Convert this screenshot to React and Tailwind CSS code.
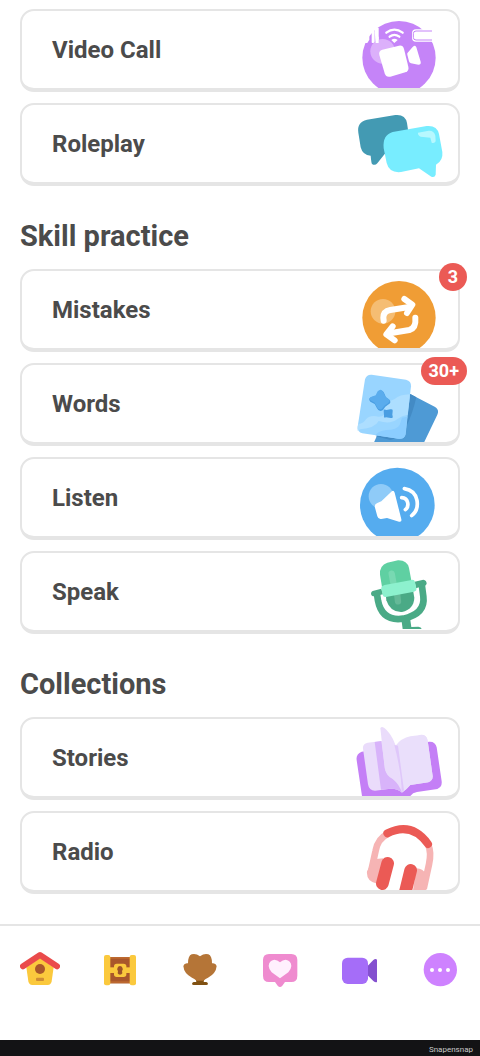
import React from 'react';

const VideoCallArt = () => (
    <svg viewBox="0 33 354 231" className="h-[77px] w-[118px]" aria-hidden="true">
        <circle cx="177" cy="173" r="110" fill="#c584f8" />
        <path d="M60 60 H88 V119 L82 129 H60 Z" fill="#fff" />
        <rect x="95" y="93" width="9" height="36" rx="2" fill="#fff" />
        <path d="M103 84 H116 V129 H107 Z" fill="#fff" />
        <circle cx="128" cy="154" r="37" fill="#dcb0fb" />
        <path d="M107 110 H116 V129 H107 Z" fill="#fff" />
        <g fill="none" stroke="#fff" strokeWidth="7" strokeLinecap="round">
            <path d="M139 98 Q163 80 188 98" />
            <path d="M149 110 Q163 99 178 110" />
        </g>
        <path d="M154 120 Q163 112 173 120 L163 129 Z" fill="#fff" />
        <path d="M250 88 H300 V125 H228 Q216 125 216 113 V100 Q216 88 228 88 Z" fill="#fff" />
        <path d="M276 93 H228 Q220 93 220 101 V112 Q220 120 228 120 H276" fill="none" stroke="#c584f8" strokeWidth="3" />
        <path d="M127 149 L177 137 Q189 135 192 147 L205 200 Q208 213 196 217 L151 230 Q138 233 134 220 L118 165 Q115 153 127 149 Z" fill="#fff" />
        <path d="M203 158 L218 141 Q226 133 229 142 L242 185 Q244 194 235 194 L213 190 Q208 189 207 184 L202 164 Q201 160 203 158 Z" fill="#fff" />
    </svg>
);

const RoleplayArt = () => (
    <svg viewBox="0 21 354 231" className="h-[77px] w-[118px]" aria-hidden="true">
        <path d="M81 65 L166 51 Q196 48 201 75 L204 95 L210 140 L134 168 L112 196 Q105 204 96 198 Q94 195 92 173 Q68 172 62 148 L55 104 Q50 72 81 65 Z" fill="#439ab3" />
        <path d="M158 102 L260 84 Q291 81 297 108 L307 162 Q310 188 288 200 L287 230 Q284 240 274 236 L237 211 L183 222 Q148 226 140 195 L131 151 Q127 111 158 102 Z" fill="#78edff" />
        <path d="M234 104 L266 98 Q282 97 286 113 L287 130 Q283 138 275 134 L271 119 L242 116 Q233 112 234 104 Z" fill="#b7f8ff" />
    </svg>
);

const MistakesArt = () => (
    <svg viewBox="0 48 354 231" className="h-[77px] w-[118px]" aria-hidden="true">
        <circle cx="177" cy="188" r="110" fill="#f09d35" />
        <circle cx="129" cy="169" r="37" fill="#f5bd73" />
        <g fill="none" stroke="#fff" strokeWidth="18" strokeLinecap="round" strokeLinejoin="round">
            <path d="M131 197 L130 188 Q130 169 151 165 L203 157" />
            <path d="M226 188 Q229 219 208 225 L154 234" />
            <path d="M193 132 L217 149 L201 174" />
            <path d="M158 214 L139 238 L164 256" />
        </g>
    </svg>
);

const WordsArt = () => (
    <svg viewBox="0 39 354 231" className="h-[77px] w-[118px]" aria-hidden="true">
        <path d="M196 135 Q202 123 212 127 L284 164 Q299 172 292 188 L248 280 H98 L125 220 Z" fill="#4e9ad5" />
        <path d="M211 126 L229 136 Q219 182 197 229 Q187 258 151 264 L108 253 Z" fill="#438bc5" />
        <path d="M95 68 L198 83 Q214 87 213 103 L197 246 Q194 262 177 260 L67 244 Q52 240 53 224 L75 82 Q79 67 95 68 Z" fill="#99d5ff" />
        <path d="M209 137 L203 188 Q186 190 171 202 Q151 218 116 207 Q105 228 61 232 L53 236 Q51 230 55 216 Q71 214 78 202 Q91 188 115 194 Q137 195 134 173 Q119 169 133 157 Q148 147 164 141 Q179 128 209 127 Z" fill="#addeff" />
        <path d="M186 197 L202 194 L196 249 Q190 263 174 260 L106 250 Q115 237 138 234 Q171 234 179 219 Z" fill="#8bcdff" />
        <path d="M116 122 Q126 110 132 122 L138 136 L149 144 Q155 153 144 158 L136 164 L129 174 Q117 182 111 169 L104 156 L91 149 Q83 140 94 135 L108 132 Z" fill="#4a9ee2" />
        <path d="M113 118 Q123 108 129 119 L136 134 L147 142 Q152 149 142 155 L133 161 L126 170 Q115 176 111 165 L104 152 L91 145 Q84 138 95 134 L107 130 Z" fill="#5aaced" />
        <path d="M131 176 Q132 170 139 174 L151 172 Q160 170 158 178 L157 188 Q161 200 152 198 L138 196 Q130 200 132 190 Z" fill="#4a9ee2" />
    </svg>
);

const ListenArt = () => (
    <svg viewBox="0 27 354 231" className="h-[77px] w-[118px]" aria-hidden="true">
        <circle cx="172" cy="165" r="112" fill="#55acef" />
        <circle cx="123" cy="139" r="37" fill="#8fcbf8" />
        <path d="M154 125 Q161 119 164 128 L184 208 Q186 217 177 215 L141 204 L124 207 Q115 209 112 199 L105 173 Q102 163 112 159 L124 154 Z" fill="#fff" />
        <g fill="none" stroke="#fff" strokeWidth="11" strokeLinecap="round">
            <path d="M185 143 Q200 144 203 158 Q206 171 196 179" />
            <path d="M193 116 Q225 121 231 151 Q236 181 215 197" />
        </g>
    </svg>
);

const SpeakArt = () => (
    <svg viewBox="0 24 354 231" className="h-[77px] w-[118px]" aria-hidden="true">
        <path d="M111 148 L114 167 Q126 230 190 221 Q257 206 250 154 L245 117" fill="none" stroke="#4aaa86" strokeWidth="20" />
        <path d="M98 138 L124 131 L129 148 L103 154 Q94 154 93 146 Q93 140 98 138 Z M224 110 L250 104 Q260 105 260 116 Q257 124 246 124 L228 130 Z" fill="#4aaa86" />
        <path d="M184 222 L210 218 L214 246 L235 245 Q244 246 245 252 H188 Z" fill="#4aaa86" />
        <path d="M137 145 L218 130 L223 158 Q222 192 186 201 Q151 203 139 166 Z" fill="#4aaa86" />
        <path d="M142 53 L174 46 Q201 45 207 69 L216 117 L127 132 L120 89 Q118 61 142 53 Z" fill="#5fd0a2" />
        <path d="M155 86 L160 113" stroke="#78d9b2" strokeWidth="19" strokeLinecap="round" />
        <path d="M171 144 L174 169" stroke="#65b998" strokeWidth="19" strokeLinecap="round" />
        <path d="M134 120 L215 105 Q223 103 225 111 L229 130 Q231 138 222 140 L138 156 Q130 158 128 149 L124 132 Q122 123 134 120 Z" fill="#8df1ce" />
    </svg>
);

const StoriesArt = () => (
    <svg viewBox="0 27 354 231" className="h-[77px] w-[118px]" aria-hidden="true">
        <path d="M65 125 L268 95 Q286 94 290 112 L305 214 Q307 231 292 237 L231 246 Q218 248 211 258 H66 L50 151 Q47 132 65 125 Z" fill="#c47ff6" />
        <path d="M83 98 L125 93 L167 109 L185 104 L239 75 Q260 72 263 92 L278 198 Q279 212 265 217 L211 225 Q200 238 186 248 Q172 235 151 236 L105 242 Q87 242 84 223 L69 116 Q67 102 83 98 Z" fill="#eadcfb" />
        <path d="M104 96 L124 93 L135 174 Q139 199 158 207 Q177 222 186 248 Q172 235 151 236 L123 239 Z" fill="#d8b3fa" />
        <path d="M121 54 Q127 46 139 59 Q163 83 172 125 L188 245 Q176 217 155 203 Q137 194 134 174 Z" fill="#eadcfb" />
        <path d="M166 108 Q184 84 211 79 L243 75 Q260 74 263 92 L278 198 Q279 212 265 217 L211 225 Q200 238 187 247 Z" fill="#eadffb" />
        <path d="M163 105 L174 107 L192 241 L185 247 Q185 192 163 105 Z" fill="#dfc7fa" />
    </svg>
);

const RadioArt = () => (
    <svg viewBox="0 24 354 231" className="h-[77px] w-[118px]" aria-hidden="true">
        <path d="M144 86 Q113 101 107 137 L94 196 M264 118 Q275 141 267 178 L251 251" fill="none" stroke="#f6b4b4" strokeWidth="20" />
        <path d="M101 163 L130 160 L112 236 Q78 230 81 199 Z M229 190 Q250 191 255 205 L265 218 L256 263 H218 Z" fill="#f6b4b4" />
        <path d="M142 85 Q215 49 264 117" fill="none" stroke="#eb5a55" strokeWidth="24" strokeLinecap="round" />
        <path d="M143 175 L127 236 M212 196 L195 265" stroke="#eb5a55" strokeWidth="38" strokeLinecap="round" />
    </svg>
);

const HomeIcon = () => (
    <svg viewBox="60 99 120 120" className="size-10" aria-hidden="true">
        <path d="M120 129 L161 157 L155 199 Q153 210 143 210 H97 Q87 210 85 199 L79 157 Z" fill="#fbc93d" />
        <path d="M69 154 L120 120 L171 154" fill="none" stroke="#ea4b4b" strokeWidth="18" strokeLinecap="round" strokeLinejoin="round" />
        <circle cx="120" cy="162" r="15" fill="#a9572b" />
        <rect x="108" y="188" width="24" height="10" rx="3" fill="#cf8d35" />
    </svg>
);

const ChestIcon = () => (
    <svg viewBox="300 99 120 120" className="size-10" aria-hidden="true">
        <rect x="326" y="126" width="68" height="79" fill="#a9572b" />
        <path d="M326 126 H394 V131 H326 Z M326 199 H394 V205 H326 Z" fill="#bd6930" />
        <path d="M326 157 H394 V174 H326 Z" fill="#fbc93d" />
        <rect x="342" y="146" width="37" height="40" rx="8" fill="#fbc93d" />
        <rect x="312" y="120" width="19" height="91" rx="6" fill="#fbc93d" />
        <rect x="389" y="120" width="19" height="91" rx="6" fill="#fbc93d" />
        <path d="M360 153 A9 9 0 0 1 366 168 L367 175 Q365 179 360 179 Q355 179 353 175 L354 168 A9 9 0 0 1 360 153 Z" fill="#9c5429" />
    </svg>
);

const LeagueIcon = () => (
    <svg viewBox="540 99 120 120" className="size-10" aria-hidden="true">
        <path d="M587 191 H613 L611 201 H619 Q624 202 624 207 Q623 210 619 210 H581 Q577 210 576 207 Q576 202 581 201 H589 Z" fill="#805112" />
        <path d="M600 124 Q613 114 625 118 Q636 122 636 145 Q647 143 650 153 Q648 176 624 188 Q617 191 610 197 H590 Q583 191 576 188 Q552 176 550 153 Q553 143 564 145 Q564 122 575 118 Q587 114 600 124 Z" fill="#b57537" />
    </svg>
);

const FriendsIcon = () => (
    <svg viewBox="60 99 120 120" className="size-10" aria-hidden="true">
        <path d="M87 117 H154 Q172 117 172 135 V182 Q172 201 154 201 H135 L127 212 Q120 220 113 212 L105 201 H87 Q69 201 69 182 V135 Q69 117 87 117 Z" fill="#ef8bcf" />
        <path d="M120 142 Q112 134 103 134 Q87 136 86 153 Q87 164 95 172 L120 190 L145 172 Q153 164 154 153 Q153 136 137 134 Q128 134 120 142 Z" fill="#fff0fd" />
    </svg>
);

const VideoIcon = () => (
    <svg viewBox="300 99 120 120" className="size-10" aria-hidden="true">
        <path d="M379 157 L400 135 Q407 129 411 134 V201 Q407 204 400 198 L379 177 Z" fill="#8450cf" />
        <rect x="306" y="128" width="78" height="79" rx="17" fill="#a56df8" />
    </svg>
);

const MoreIcon = () => (
    <svg viewBox="540 99 120 120" className="size-10" aria-hidden="true">
        <circle cx="601" cy="164" r="50" fill="#ce82ff" />
        <g fill="#fff">
            <circle cx="576" cy="165" r="6" />
            <circle cx="600" cy="165" r="6" />
            <circle cx="624" cy="165" r="6" />
        </g>
    </svg>
);

const PracticeCard = ({ title, Art, badge }) => (
    <button
        type="button"
        className="relative flex w-full items-center justify-between rounded-[14px] border-2 border-b-4 border-[#e5e5e5] bg-white pl-[30px] text-left"
    >
        <span className="text-2xl font-bold">{title}</span>
        <Art />
        {badge && (
            <span className="absolute -top-2 -right-[9px] flex h-7 min-w-7 items-center justify-center rounded-full bg-[#eb5a55] px-2 text-lg font-bold text-white">
                {badge}
            </span>
        )}
    </button>
);

const SectionTitle = ({ children }) => (
    <h2 className="mt-8 mb-[15px] text-[29px] leading-9 font-bold">{children}</h2>
);

const CardList = ({ items }) => (
    <div className="flex flex-col gap-[11px]">
        {items.map((item) => (
            <PracticeCard key={item.title} {...item} />
        ))}
    </div>
);

const conversation = [
    { title: 'Video Call', Art: VideoCallArt },
    { title: 'Roleplay', Art: RoleplayArt },
];

const skills = [
    { title: 'Mistakes', Art: MistakesArt, badge: '3' },
    { title: 'Words', Art: WordsArt, badge: '30+' },
    { title: 'Listen', Art: ListenArt },
    { title: 'Speak', Art: SpeakArt },
];

const collections = [
    { title: 'Stories', Art: StoriesArt },
    { title: 'Radio', Art: RadioArt },
];

const tabs = [
    { label: 'Home', Icon: HomeIcon },
    { label: 'Quests', Icon: ChestIcon },
    { label: 'Leagues', Icon: LeagueIcon },
    { label: 'Friends', Icon: FriendsIcon },
    { label: 'Video', Icon: VideoIcon },
    { label: 'More', Icon: MoreIcon },
];

const App = () => {
    return (
        <div className="flex min-h-screen flex-col bg-white font-['Roboto','Liberation_Sans',sans-serif] text-[#4b4b4b]">
            <main className="grow px-5 pt-[9px] pb-[30px]">
                <CardList items={conversation} />

                <SectionTitle>Skill practice</SectionTitle>
                <CardList items={skills} />

                <SectionTitle>Collections</SectionTitle>
                <CardList items={collections} />
            </main>

            <nav className="grid grid-cols-6 border-t-2 border-[#e5e5e5] pt-[22px] pb-[52px]">
                {tabs.map(({ label, Icon }) => (
                    <a key={label} href="#" aria-label={label} className="flex justify-center">
                        <Icon />
                    </a>
                ))}
            </nav>

            <footer className="flex h-4 items-center justify-end bg-[#131315] pt-1 pr-[7px] text-[8px] leading-3 text-[#c9c9c9]">
                Snapensnap
            </footer>
        </div>
    );
};

export default App;
